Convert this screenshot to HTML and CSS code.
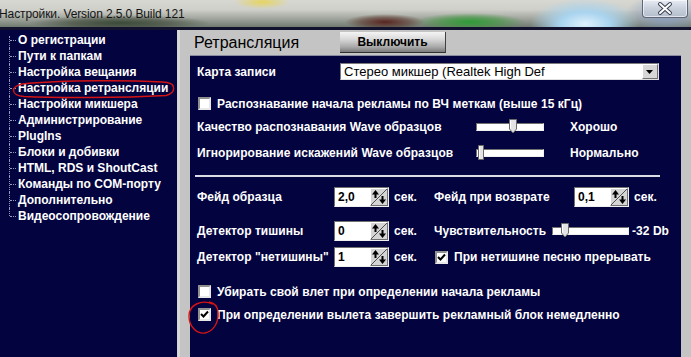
FILE: index.html
```html
<!DOCTYPE html>
<html lang="ru">
<head>
<meta charset="utf-8">
<title>Настройки</title>
<link rel="stylesheet" href="styles.css">
</head>
<body>
<div class="window">
  <div class="titlebar">
    <span class="title">Настройки. Version 2.5.0 Build 121</span>
    <div class="close">
      <svg width="45" height="18" viewBox="0 0 45 18"><path d="M17 4 L27 13 M27 4 L17 13" stroke="#3a4050" stroke-width="4" stroke-linecap="round"/><path d="M17 4 L27 13 M27 4 L17 13" stroke="#ffffff" stroke-width="2" stroke-linecap="round"/></svg>
    </div>
  </div>
  <div class="main">
    <nav class="sidebar">
      <ul class="tree">
        <li>О регистрации</li>
        <li>Пути к папкам</li>
        <li>Настройка вещания</li>
        <li>Настройка ретрансляции</li>
        <li>Настройки микшера</li>
        <li>Администрирование</li>
        <li>PlugIns</li>
        <li>Блоки и добивки</li>
        <li>HTML, RDS и ShoutCast</li>
        <li>Команды по COM-порту</li>
        <li>Дополнительно</li>
        <li>Видеосопровождение</li>
      </ul>
    </nav>
    <section class="panel">
      <header class="panel-head">
        <h1>Ретрансляция</h1>
        <button class="btn">Выключить</button>
      </header>
      <div class="content">
        <div class="row r1">
          <span class="lbl-select">Карта записи</span>
          <div class="select">
            <span class="select-text">Стерео микшер (Realtek High Def</span>
            <span class="dd"><svg width="8" height="4" viewBox="0 0 8 4"><path d="M0 0 H7 L3.5 4 Z" fill="#000"/></svg></span>
          </div>
        </div>
        <div class="row r2">
          <span class="check"></span>
          <span class="check-lbl">Распознавание начала рекламы по ВЧ меткам (выше 15 кГц)</span>
        </div>
        <div class="row r3">
          <span class="lbl-slider">Качество распознавания Wave образцов</span>
          <div class="track t1"><svg class="thumb" style="left:32px" width="8" height="15" viewBox="0 0 8 15"><path d="M0.5 0.5 H7.5 V10 L4 14 L0.5 10 Z" fill="#e4e4e4" stroke="#6a6a6a"/><path d="M1.5 1.5 V9.6" stroke="#fff"/></svg></div>
          <span class="val">Хорошо</span>
        </div>
        <div class="row r4">
          <span class="lbl-slider">Игнорирование искажений Wave образцов</span>
          <div class="track t1"><svg class="thumb" style="left:1px" width="6" height="15" viewBox="0 0 6 15"><path d="M0.5 0.5 H5.5 V14.5 H0.5 Z" fill="#e4e4e4" stroke="#6a6a6a"/><path d="M1.5 1.5 V13.5" stroke="#fff"/></svg></div>
          <span class="val">Нормально</span>
        </div>
        <div class="sep"></div>
        <div class="row r6">
          <span class="lbl-spin">Фейд образца</span>
          <div class="spin"><span class="spin-val">2,0</span><span class="spin-btn"><svg width="16" height="16" viewBox="0 0 16 16"><path d="M0 16 L16 0" stroke="#505050"/><path d="M4.5 1 L1 5.5 H3.5 V9 H5.5 V5.5 H8 Z" fill="#000"/><path d="M11.5 15 L8 10.5 H10.5 V7 H12.5 V10.5 H15 Z" fill="#000"/></svg></span></div>
          <span class="unit">сек.</span>
          <span class="lbl-spin2">Фейд при возврате</span>
          <div class="spin"><span class="spin-val">0,1</span><span class="spin-btn"><svg width="16" height="16" viewBox="0 0 16 16"><path d="M0 16 L16 0" stroke="#505050"/><path d="M4.5 1 L1 5.5 H3.5 V9 H5.5 V5.5 H8 Z" fill="#000"/><path d="M11.5 15 L8 10.5 H10.5 V7 H12.5 V10.5 H15 Z" fill="#000"/></svg></span></div>
          <span class="unit">сек.</span>
        </div>
        <div class="row r7">
          <span class="lbl-spin">Детектор тишины</span>
          <div class="spin"><span class="spin-val">0</span><span class="spin-btn"><svg width="16" height="16" viewBox="0 0 16 16"><path d="M0 16 L16 0" stroke="#505050"/><path d="M4.5 1 L1 5.5 H3.5 V9 H5.5 V5.5 H8 Z" fill="#000"/><path d="M11.5 15 L8 10.5 H10.5 V7 H12.5 V10.5 H15 Z" fill="#000"/></svg></span></div>
          <span class="unit">сек.</span>
          <span class="lbl-sens">Чувствительность</span>
          <div class="track t2"><svg class="thumb" style="left:8px" width="8" height="15" viewBox="0 0 8 15"><path d="M0.5 0.5 H7.5 V10 L4 14 L0.5 10 Z" fill="#e4e4e4" stroke="#6a6a6a"/><path d="M1.5 1.5 V9.6" stroke="#fff"/></svg></div>
          <span class="db">-32 Db</span>
        </div>
        <div class="row r8">
          <span class="lbl-spin">Детектор "нетишины"</span>
          <div class="spin"><span class="spin-val">1</span><span class="spin-btn"><svg width="16" height="16" viewBox="0 0 16 16"><path d="M0 16 L16 0" stroke="#505050"/><path d="M4.5 1 L1 5.5 H3.5 V9 H5.5 V5.5 H8 Z" fill="#000"/><path d="M11.5 15 L8 10.5 H10.5 V7 H12.5 V10.5 H15 Z" fill="#000"/></svg></span></div>
          <span class="unit">сек.</span>
          <span class="check checked"><svg width="9" height="9" viewBox="0 0 9 9"><path d="M1 4 L3.5 6.5 L8 1.5" fill="none" stroke="#000" stroke-width="2"/></svg></span>
          <span class="check-lbl">При нетишине песню прерывать</span>
        </div>
        <div class="row r9">
          <span class="check"></span>
          <span class="check-lbl">Убирать свой влет при определении начала рекламы</span>
        </div>
        <div class="row r10">
          <span class="check checked"><svg width="9" height="9" viewBox="0 0 9 9"><path d="M1 4 L3.5 6.5 L8 1.5" fill="none" stroke="#000" stroke-width="2"/></svg></span>
          <span class="check-lbl">При определении вылета завершить рекламный блок немедленно</span>
        </div>
      </div>
    </section>
  </div>
  <svg class="annot" width="691" height="357" viewBox="0 0 691 357">
    <path d="M22 84 C60 80 140 80 167 82.5 C176 84 176 93 166 95.5 C120 98 55 98 24 96.5 C11 95.5 10 87 22 84 Z" fill="none" stroke="#d41414" stroke-width="1.4"/>
    <path d="M213 304 C201 299 189 305 189 316 C189 327 197 334 205 333 C214 331 219 322 218 312 C217.5 306 215 303 209 302" fill="none" stroke="#d41414" stroke-width="1.4"/>
  </svg>
</div>
</body>
</html>
```
FILE: styles.css
```css
* { box-sizing: border-box; }

body {
  margin: 0;
  width: 691px;
  height: 357px;
  overflow: hidden;
  font-family: "Liberation Sans", Arial, sans-serif;
}

.window {
  position: relative;
  width: 691px;
  height: 357px;
  display: flex;
  flex-direction: column;
  background: #c4c4c4;
}

.titlebar {
  height: 30px;
  flex: none;
  display: flex;
  justify-content: space-between;
  align-items: flex-start;
  border-bottom: 3px solid #12122e;
  background:
    radial-gradient(ellipse 55px 26px at 585px 24px, #dff0fb 0%, #a9d4ef 45%, rgba(140,190,230,0) 100%),
    radial-gradient(ellipse 55px 9px at 470px 22px, #2e9a36 0%, rgba(60,150,60,0.6) 55%, rgba(60,150,60,0) 100%),
    radial-gradient(ellipse 40px 8px at 385px 22px, #5a2420 0%, rgba(80,40,30,0.5) 60%, rgba(80,40,30,0) 100%),
    radial-gradient(ellipse 90px 8px at 120px 23px, #3a4a38 0%, rgba(60,70,55,0.6) 55%, rgba(60,70,55,0) 100%),
    radial-gradient(ellipse 28px 7px at 262px 2px, #e6d460 0%, rgba(230,210,100,0) 100%),
    radial-gradient(ellipse 40px 20px at 665px 14px, #8a9fc2 0%, rgba(130,150,190,0) 100%),
    linear-gradient(to bottom, #d8d8d2 0%, #cfd0ca 35%, #a6aaa2 65%, #707a70 100%);
}

.title {
  font-size: 12px;
  color: #141414;
  margin-top: 7px;
  margin-left: -1px;
  letter-spacing: -0.1px;
}

.close {
  width: 46px;
  height: 18px;
  margin-right: 3px;
  border: 1px solid #5e6678;
  border-top: none;
  border-radius: 0 0 4px 4px;
  background: linear-gradient(to bottom, #e8ecf3 0%, #c8d0dc 50%, #b4bdcc 100%);
  box-shadow: inset 0 0 0 1px rgba(255,255,255,0.6);
}

.close svg { display: block; }

.main {
  flex: 1;
  display: flex;
  min-height: 0;
}

.sidebar {
  width: 178px;
  flex: none;
  background: #03033f;
  border-right: 1px solid #d4d4d8;
  padding-top: 2px;
}

.tree {
  list-style: none;
  margin: 0;
  padding: 0 0 0 18px;
}

.tree li {
  position: relative;
  height: 16px;
  line-height: 16px;
  color: #ffffff;
  font-weight: bold;
  font-size: 12px;
  white-space: nowrap;
}

.tree li::before {
  content: "";
  position: absolute;
  left: -8px;
  top: 8px;
  width: 6px;
  border-top: 1px dotted #9a9ab8;
}

.tree li::after {
  content: "";
  position: absolute;
  left: -9px;
  top: 0;
  height: 16px;
  border-left: 1px dotted #9a9ab8;
}

.tree li:first-child::after { top: 4px; height: 12px; }
.tree li:last-child::after { height: 8px; }

.panel {
  flex: 1;
  display: flex;
  flex-direction: column;
  padding: 0 10px;
  background: #c4c4c4;
  border-left: 2px solid #d8d8d8;
}

.panel-head {
  height: 25px;
  flex: none;
  display: flex;
  align-items: flex-start;
}

.panel-head h1 {
  margin: 5px 0 0 0;
  width: 150px;
  padding-left: 4px;
  font-size: 16px;
  line-height: 16px;
  font-weight: normal;
  color: #000;
}

.btn {
  margin-top: 2px;
  width: 106px;
  height: 21px;
  border: none;
  border-right: 1px solid #404040;
  border-bottom: 1px solid #303030;
  background: linear-gradient(to bottom, #f4f4f4 0%, #dadada 35%, #a8a8a8 75%, #7a7a7a 100%);
  font-family: "Liberation Sans", Arial, sans-serif;
  font-weight: bold;
  font-size: 12px;
  color: #000;
  padding: 0;
}

.content {
  flex: 1;
  background: #03033f;
  border-top: 1px solid #8a8aa0;
  padding-left: 7px;
  color: #ffffff;
  font-weight: bold;
  font-size: 12px;
  letter-spacing: 0.05px;
}

.row {
  display: flex;
  align-items: center;
  white-space: nowrap;
}

.r1 { margin-top: 7px; height: 17px; }
.r2 { margin-top: 17px; height: 13px; }
.r3 { margin-top: 9px; height: 16px; }
.r4 { margin-top: 10px; height: 16px; }
.r6 { margin-top: 10px; height: 20px; }
.r7 { margin-top: 14px; height: 20px; }
.r8 { margin-top: 6px; height: 20px; }
.r9 { margin-top: 18px; height: 13px; }
.r10 { margin-top: 10px; height: 13px; }

.sep {
  margin-top: 14px;
  margin-left: -2px;
  width: 465px;
  height: 2px;
  background: #dcdce4;
}

.lbl-select { width: 143px; }

.select {
  width: 319px;
  height: 17px;
  display: flex;
  align-items: center;
  background: #ffffff;
  border: 1px solid #7a7a7a;
  border-right-color: #e0e0e0;
  border-bottom-color: #e0e0e0;
  color: #000;
}

.select-text {
  padding-left: 3px;
  font-weight: normal;
  font-size: 13px;
  letter-spacing: 0;
}

.dd {
  margin-left: auto;
  width: 16px;
  height: 15px;
  display: flex;
  align-items: center;
  justify-content: center;
  background: #d6d6d6;
  border: 1px solid;
  border-color: #ffffff #707070 #707070 #ffffff;
}

.dd svg { display: block; }

.check {
  width: 13px;
  height: 13px;
  flex: none;
  margin-left: 1px;
  background: #ffffff;
  border: 2px solid;
  border-color: #909090 #e8e8e8 #e8e8e8 #909090;
  display: flex;
  align-items: center;
  justify-content: center;
}

.check svg { display: block; }

.check-lbl { margin-left: 6px; }

.lbl-slider { width: 279px; }

.track {
  position: relative;
  height: 8px;
  background: #ffffff;
  border: 1px solid;
  border-color: #707070 #f0f0f0 #f0f0f0 #707070;
}

.t1 { width: 68px; }
.t2 { width: 77px; }

.thumb {
  position: absolute;
  top: -5px;
  display: block;
}

.val { margin-left: 26px; }

.lbl-spin { width: 137px; }
.lbl-spin2 { width: 140px; }
.lbl-sens { width: 118px; }

.unit {
  width: 45px;
  padding-left: 5px;
}

.spin {
  width: 55px;
  height: 20px;
  display: flex;
  border: 1px solid;
  border-color: #707070 #f0f0f0 #f0f0f0 #707070;
  background: #ffffff;
}

.spin-val {
  flex: 1;
  color: #000;
  padding-left: 3px;
  line-height: 18px;
}

.spin-btn {
  width: 18px;
  height: 18px;
  background: #d4d4d4;
  border: 1px solid;
  border-color: #ffffff #707070 #707070 #ffffff;
}

.spin-btn svg { display: block; }

.db { margin-left: 3px; }

.annot {
  position: absolute;
  left: 0;
  top: 0;
  pointer-events: none;
}
```
